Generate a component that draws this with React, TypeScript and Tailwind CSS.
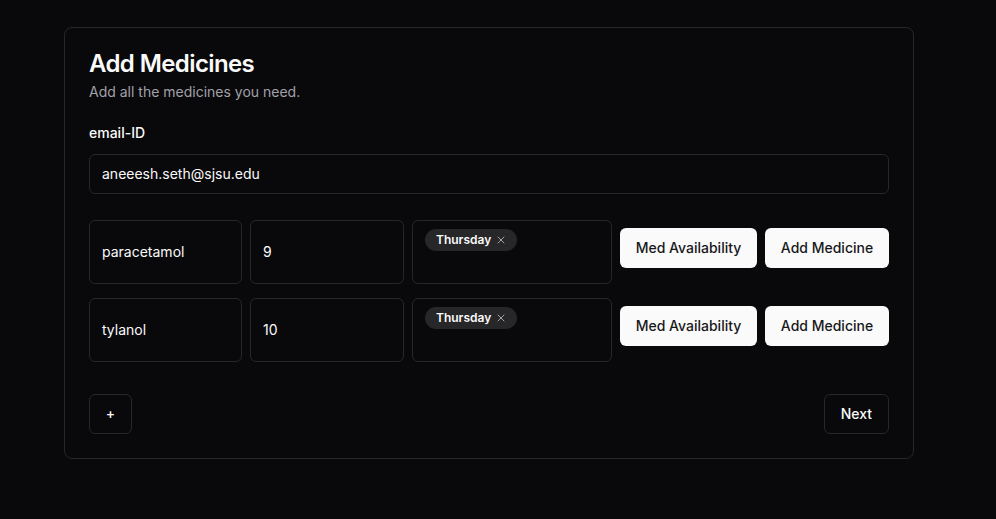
import { X } from 'lucide-react'

type Med = { name: string; dose: string; days: string[] }

const MEDS: Med[] = [
  { name: 'paracetamol', dose: '9', days: ['Thursday'] },
  { name: 'tylanol', dose: '10', days: ['Thursday'] },
]

function DayBadge({ day }: { day: string }) {
  return (
    <span className="inline-flex h-[22px] items-center gap-1 rounded-full bg-[#27272a] pl-[11px] pr-[10px] text-xs font-semibold text-[#fafafa]">
      {day}
      <X className="h-3 w-3 text-[#a1a1aa]" strokeWidth={2} />
    </span>
  )
}

function MedRow({ med }: { med: Med }) {
  return (
    <div className="flex h-[64px] gap-2">
      <div className="flex w-[153px] shrink-0 items-center rounded-md border border-[#27272a] px-3 text-sm text-[#fafafa]">
        {med.name}
      </div>
      <div className="flex w-[154px] shrink-0 items-center rounded-md border border-[#27272a] px-3 text-sm text-[#fafafa]">
        {med.dose}
      </div>
      <div className="flex w-[200px] shrink-0 flex-wrap items-start gap-1 rounded-md border border-[#27272a] px-3 py-2">
        {med.days.map((d) => (
          <DayBadge key={d} day={d} />
        ))}
      </div>
      <button className="mt-2 h-10 w-[137px] shrink-0 whitespace-nowrap rounded-md bg-[#fafafa] text-sm font-medium text-[#18181b]">
        Med Availability
      </button>
      <button className="mt-2 h-10 w-[124px] shrink-0 whitespace-nowrap rounded-md bg-[#fafafa] text-sm font-medium text-[#18181b]">
        Add Medicine
      </button>
    </div>
  )
}

export default function App() {
  return (
    <div className="min-h-[519px] bg-[#09090b] pt-[27px] font-['Inter',sans-serif] text-[#fafafa]">
      <div className="ml-16 w-[850px] rounded-lg border border-[#27272a] bg-[#09090b]">
        {/* header */}
        <div className="flex flex-col gap-1.5 p-6">
          <h1 className="text-2xl leading-none font-semibold tracking-tight">Add Medicines</h1>
          <p className="text-sm text-[#a1a1aa]">Add all the medicines you need.</p>
        </div>

        <div className="px-6 pb-6">
          <div className="text-sm leading-none font-medium">email-ID</div>
          <div className="mt-[14px] flex h-10 items-center rounded-md border border-[#27272a] px-3 text-sm">
            aneeesh.seth@sjsu.edu
          </div>

          <div className="mt-[26px] flex flex-col gap-[14px]">
            {MEDS.map((m) => (
              <MedRow key={m.name} med={m} />
            ))}
          </div>

          <div className="mt-8 flex items-center justify-between">
            <button className="h-10 w-[43px] rounded-md border border-[#27272a] text-sm font-medium">
              +
            </button>
            <button className="h-10 rounded-md border border-[#27272a] px-4 text-sm font-medium">
              Next
            </button>
          </div>
        </div>
      </div>
    </div>
  )
}
